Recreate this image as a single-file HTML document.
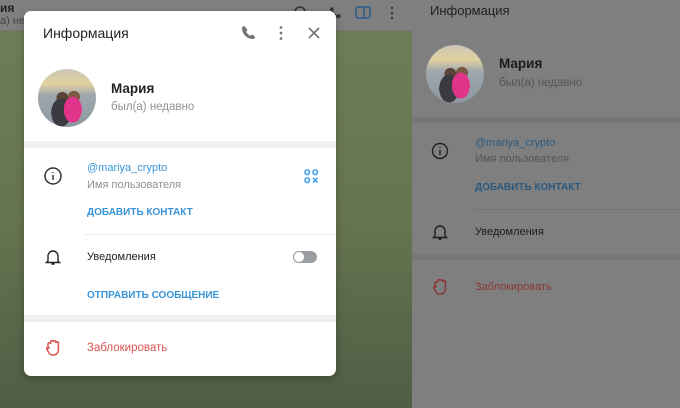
<!DOCTYPE html>
<html><head><meta charset="utf-8"><style>
*{margin:0;padding:0;box-sizing:border-box}
body{width:680px;height:408px;overflow:hidden;position:relative;font-family:"Liberation Sans","Noto Sans CJK SC",sans-serif;background:#7f7f7f}
.abs{position:absolute}
.chat{left:0;top:31px;width:412px;height:377px;background:linear-gradient(180deg,#6e7d58 0%,#66744f 50%,#4f5d45 100%)}
.top{left:0;top:0;width:412px;height:31px;background:#808080;border-bottom:1px solid #767676}
.rp{left:412px;top:0;width:268px;height:408px;background:#7f7f7f}
.band{background:#777;height:6px}
.modal{left:24px;top:11px;width:312px;height:365px;background:#fff;border-radius:7px;overflow:hidden;box-shadow:0 2px 8px rgba(0,0,0,.25)}
.t{position:absolute;white-space:nowrap}
.av{border-radius:50%;background:
radial-gradient(ellipse 9px 13px at 60% 70%,#e0338a 0 100%,transparent 100%),
radial-gradient(ellipse 10px 14px at 40% 75%,#3a3a40 0 100%,transparent 100%),
radial-gradient(circle 6px at 42% 50%,#5a4438 0 100%,transparent 100%),
radial-gradient(circle 6px at 62% 48%,#7a5a45 0 100%,transparent 100%),
linear-gradient(180deg,#c9c6b8 0%,#e2d2a0 25%,#9fa7ad 45%,#8c98a0 100%)}
.blue{color:#3a95d8}
</style></head><body>
<div class="abs top"></div>
<div class="t" style="left:0;top:1px;font-size:12px;font-weight:bold;color:#222">ия</div>
<div class="t" style="left:0;top:15px;font-size:11px;color:#444">а) недавно</div>
<svg class="abs" style="left:292px;top:4px" width="120" height="20" viewBox="0 0 120 20" fill="none" stroke="#333" stroke-width="1.6">
<circle cx="8" cy="8" r="5"/><path d="M40 3c-1 0-2 1-2 2 0 5 4 9 9 9 1 0 2-1 2-2l-2-2-2 1c-1-1-3-2-4-4l1-2z" fill="#333" stroke="none"/>
<rect x="64" y="3" width="14" height="11" rx="2" stroke="#2a5e8c"/><path d="M72 3v11" stroke="#2a5e8c"/>
<circle cx="100" cy="4" r="1.2" fill="#333" stroke="none"/><circle cx="100" cy="9" r="1.2" fill="#333" stroke="none"/><circle cx="100" cy="14" r="1.2" fill="#333" stroke="none"/>
</svg>
<div class="abs chat"></div>
<div class="abs rp"></div>
<div class="t" style="left:430px;top:3px;font-size:13px;color:#222">Информация</div>
<div class="abs av" style="left:426px;top:45px;width:58px;height:58px"></div>
<div class="t" style="left:499px;top:56px;font-size:13.5px;font-weight:bold;color:#1c1c1c">Мария</div>
<div class="t" style="left:499px;top:77px;font-size:11.5px;color:#555">был(а) недавно</div>
<div class="abs band" style="left:412px;top:117px;width:268px"></div>
<svg class="abs" style="left:431px;top:142px" width="18" height="18" viewBox="0 0 18 18" fill="none" stroke="#1f1f1f" stroke-width="1.4"><circle cx="9" cy="9" r="7.5"/><path d="M9 8v5M9 5v1"/></svg>
<div class="t" style="left:475px;top:137px;font-size:11px;color:#2a5a80">@mariya_crypto</div>
<div class="t" style="left:475px;top:153px;font-size:11px;color:#555">Имя пользователя</div>
<div class="t" style="left:475px;top:182px;font-size:10px;font-weight:bold;color:#2a5a80">ДОБАВИТЬ КОНТАКТ</div>
<div class="abs" style="left:473px;top:209px;width:207px;height:1px;background:#747474"></div>
<svg class="abs" style="left:432px;top:223px" width="16" height="18" viewBox="0 0 16 18" fill="none" stroke="#1f1f1f" stroke-width="1.4"><path d="M3 13V8a5 5 0 0 1 10 0v5l1.5 1.5h-13zM6.5 16h3"/></svg>
<div class="t" style="left:475px;top:226px;font-size:11px;color:#1c1c1c">Уведомления</div>
<div class="abs band" style="left:412px;top:254px;width:268px"></div>
<svg class="abs" style="left:432px;top:278px" width="16" height="18" viewBox="0 0 16 18" fill="none" stroke="#8a3838" stroke-width="1.5"><path d="M3 9V5a1.3 1.3 0 0 1 2.6 0V3a1.3 1.3 0 0 1 2.6 0v0a1.3 1.3 0 0 1 2.6 0v1a1.3 1.3 0 0 1 2.6 0v7a5 5 0 0 1-5 5h-1a5 5 0 0 1-4-3l-1.5-3a1 1 0 0 1 2-1z"/></svg>
<div class="t" style="left:475px;top:281px;font-size:11px;color:#8a3838">Заблокировать</div>

<div class="abs modal">
<div class="t" style="left:19px;top:14px;font-size:14px;color:#222">Информация</div>
<svg class="abs" style="left:216px;top:13px" width="82" height="18" viewBox="0 0 82 18" fill="none" stroke="#707579" stroke-width="1.6">
<path d="M4 2c-1.2 0-2 1-2 2 0 6 5 11 11 11 1 0 2-.8 2-2l-2.5-2.5-2.5 1.2c-1.5-.8-3-2.3-3.8-3.8l1.2-2.5z" fill="#707579" stroke="none"/>
<circle cx="41" cy="3.5" r="1.4" fill="#707579" stroke="none"/><circle cx="41" cy="9" r="1.4" fill="#707579" stroke="none"/><circle cx="41" cy="14.5" r="1.4" fill="#707579" stroke="none"/>
<path d="M69 4l10 10M79 4L69 14"/>
</svg>
<div class="abs av" style="left:14px;top:58px;width:58px;height:58px"></div>
<div class="t" style="left:87px;top:70px;font-size:13.5px;font-weight:bold;color:#222">Мария</div>
<div class="t" style="left:87px;top:90px;font-size:11.5px;color:#8e9296">был(а) недавно</div>
<div class="abs" style="left:0;top:130px;width:312px;height:7px;background:#f0f0f0"></div>
<svg class="abs" style="left:19px;top:155px" width="20" height="20" viewBox="0 0 20 20" fill="none" stroke="#333" stroke-width="1.5"><circle cx="10" cy="10" r="8"/><path d="M10 9v5M10 6v1"/></svg>
<div class="t blue" style="left:63px;top:151px;font-size:11px">@mariya_crypto</div>
<div class="t" style="left:63px;top:168px;font-size:11px;color:#8e9296">Имя пользователя</div>
<svg class="abs" style="left:280px;top:158px" width="15" height="15" viewBox="0 0 15 15" fill="none" stroke="#4aa3e8" stroke-width="1.6"><rect x="1" y="1" width="4.5" height="4.5" rx="2"/><rect x="9" y="1" width="4.5" height="4.5" rx="2"/><rect x="1" y="9" width="4.5" height="4.5" rx="2"/><path d="M9 9l4.5 4.5M13.5 9L9 13.5"/></svg>
<div class="t blue" style="left:63px;top:196px;font-size:10px;font-weight:bold">ДОБАВИТЬ КОНТАКТ</div>
<div class="abs" style="left:61px;top:223px;width:251px;height:1px;background:#ececec"></div>
<svg class="abs" style="left:21px;top:237px" width="16" height="18" viewBox="0 0 16 18" fill="none" stroke="#222" stroke-width="1.4"><path d="M3 13V8a5 5 0 0 1 10 0v5l1.5 1.5h-13zM6.5 16h3"/></svg>
<div class="t" style="left:63px;top:240px;font-size:11px;color:#222">Уведомления</div>
<div class="abs" style="left:269px;top:240px;width:24px;height:12px;border-radius:6px;background:#9a9ea2"></div>
<div class="abs" style="left:269px;top:240px;width:12px;height:12px;border-radius:50%;background:#fff;border:1.6px solid #9a9ea2"></div>
<div class="t blue" style="left:63px;top:279px;font-size:10px;font-weight:bold">ОТПРАВИТЬ СООБЩЕНИЕ</div>
<div class="abs" style="left:0;top:304px;width:312px;height:7px;background:#f0f0f0"></div>
<svg class="abs" style="left:21px;top:328px" width="16" height="18" viewBox="0 0 16 18" fill="none" stroke="#d9534f" stroke-width="1.5"><path d="M3 9V5a1.3 1.3 0 0 1 2.6 0V3a1.3 1.3 0 0 1 2.6 0v0a1.3 1.3 0 0 1 2.6 0v1a1.3 1.3 0 0 1 2.6 0v7a5 5 0 0 1-5 5h-1a5 5 0 0 1-4-3l-1.5-3a1 1 0 0 1 2-1z"/></svg>
<div class="t" style="left:63px;top:331px;font-size:11.5px;color:#d9534f">Заблокировать</div>
</div>
</body></html>
